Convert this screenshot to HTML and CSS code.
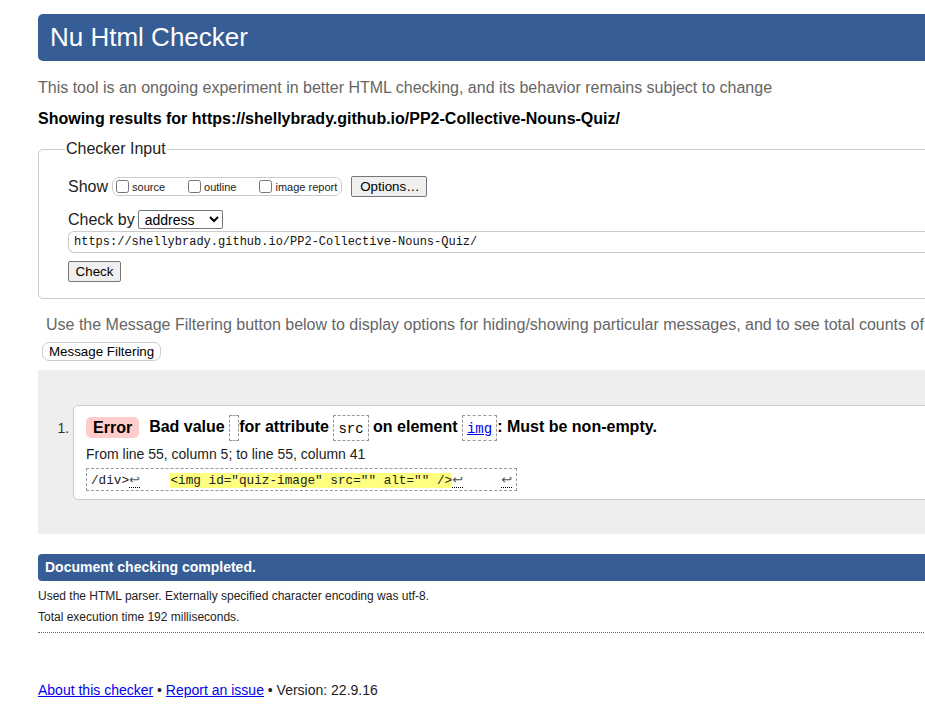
FILE: index.html
```html
<!DOCTYPE html>
<html lang="en">
<head>
<meta charset="utf-8">
<title>Showing results for https://shellybrady.github.io/PP2-Collective-Nouns-Quiz/ - Nu Html Checker</title>
<link rel="stylesheet" href="styles.css">
</head>
<body>
<div class="page">
  <h1 class="title">Nu Html Checker</h1>
  <p class="intro">This tool is an ongoing experiment in better HTML checking, and its behavior remains subject to change</p>
  <p class="showing">Showing results for https://shellybrady.github.io/PP2-Collective-Nouns-Quiz/</p>

  <fieldset class="checker">
    <legend class="legend">Checker Input</legend>
    <div class="row show-row">
      <span class="label">Show</span>
      <span class="opts">
        <label class="opt"><input type="checkbox" class="cb">source</label>
        <label class="opt"><input type="checkbox" class="cb">outline</label>
        <label class="opt"><input type="checkbox" class="cb">image report</label>
      </span>
      <button class="btn btn-options">Options…</button>
    </div>
    <div class="row by-row">
      <span class="label">Check by</span>
      <select class="select"><option>address</option></select>
    </div>
    <div class="url">https://shellybrady.github.io/PP2-Collective-Nouns-Quiz/</div>
    <button class="btn btn-check">Check</button>
  </fieldset>

  <p class="filter-note">Use the Message Filtering button below to display options for hiding/showing particular messages, and to see total counts of errors and warnings.</p>
  <button class="btn-filter">Message Filtering</button>

  <div class="results">
    <ol class="messages">
      <li class="msg">
        <div class="msg-box">
          <p class="msg-line"><span class="badge">Error</span><span class="msg-text">Bad value <code class="cbox empty"></code>for attribute <code class="cbox">src</code> on element <code class="cbox"><a href="#" class="elink">img</a></code>: Must be non-empty.</span></p>
          <p class="loc">From line 55, column 5; to line 55, column 41</p>
          <p class="extract"><code>/div&gt;<b class="lf">↩</b>    <span class="hl">&lt;img id="quiz-image" src="" alt="" /&gt;</span><b class="lf">↩</b>     <b class="lf">↩</b></code></p>
        </div>
      </li>
    </ol>
  </div>

  <p class="done">Document checking completed.</p>
  <p class="details first">Used the HTML parser. Externally specified character encoding was utf-8.</p>
  <p class="details">Total execution time 192 milliseconds.</p>
  <hr class="rule">

  <p class="footer"><a href="#" class="flink">About this checker</a> • <a href="#" class="flink">Report an issue</a> • Version: 22.9.16</p>
</div>
</body>
</html>
```

FILE: styles.css
```css
html { overflow: hidden; }
body {
  margin: 0;
  font-family: "Liberation Sans", Arial, sans-serif;
  color: #000;
  background: #fff;
}
.page {
  margin: 14px 0 0 38px;
  width: 1150px;
}
.title {
  margin: 0;
  height: 47px;
  line-height: 47px;
  background: #365d95;
  color: #fff;
  font-size: 26px;
  font-weight: normal;
  padding-left: 12px;
  border-radius: 5px;
}
.intro {
  margin: 17px 0 0;
  color: #666;
  font-size: 16px;
  line-height: 20px;
  white-space: nowrap;
}
.showing {
  margin: 11px 0 0;
  font-size: 16px;
  line-height: 20px;
  font-weight: bold;
  white-space: nowrap;
}
.checker {
  margin: 10px 0 0;
  border: 1px solid #ccc;
  border-radius: 5px;
  padding: 16px 0 16px 29px;
}
.legend {
  font-size: 16px;
  line-height: 20px;
  padding: 0 1px;
  margin-left: -3px;
  color: #222;
}
.row {
  display: flex;
  align-items: center;
}
.show-row { height: 23px; }
.label {
  font-size: 16px;
  color: #222;
}
.opts {
  display: inline-flex;
  align-items: center;
  margin-left: 4px;
  height: 17px;
  border: 1px solid #ccc;
  border-radius: 7px;
  padding: 0 4px 0 0;
}
.opt {
  display: inline-flex;
  align-items: center;
  font-size: 11px;
  margin-right: 19px;
  color: #222;
}
.opt:last-child { margin-right: 0; }
.cb {
  width: 13px;
  height: 13px;
  margin: 0 3px 0 3px;
}
.opt + .opt .cb { margin-left: 4px; }
.btn {
  font-family: "Liberation Sans", Arial, sans-serif;
  font-size: 13.33px;
  background: #efefef;
  border: 1px solid #767676;
  border-radius: 2px;
  color: #000;
  padding: 0 8px;
  height: 21px;
}
.btn-options {
  margin-left: 9px;
  width: 76px;
}
.by-row {
  margin-top: 11px;
  height: 21px;
}
.select {
  margin-left: 3px;
  width: 85px;
  height: 19px;
  font-family: "Liberation Sans", Arial, sans-serif;
  font-size: 14px;
  border: 1px solid #767676;
  border-radius: 2px;
  background: #fff;
  padding: 0 0 0 2px;
}
.url {
  margin-top: 1px;
  height: 22px;
  box-sizing: border-box;
  border: 1px solid #ccc;
  border-right: none;
  border-radius: 6px 0 0 6px;
  padding-left: 5px;
  font-family: "Liberation Mono", "Courier New", monospace;
  font-size: 12px;
  line-height: 20px;
  color: #111;
}
.btn-check {
  margin-top: 8px;
  width: 53px;
  padding: 0;
}
.filter-note {
  margin: 16px 0 0 8px;
  font-size: 16px;
  line-height: 20px;
  color: #666;
  white-space: nowrap;
}
.btn-filter {
  display: block;
  margin: 7px 0 0 4px;
  height: 19px;
  padding: 0 6px;
  font-family: "Liberation Sans", Arial, sans-serif;
  font-size: 13.33px;
  background: #fff;
  border: 1px solid #ccc;
  border-radius: 7px;
  color: #000;
}
.results {
  margin-top: 9px;
  background: #eee;
  padding: 35px 0 34px;
}
.messages {
  margin: 0;
  padding: 0 0 0 35px;
  font-size: 14px;
  color: #333;
}
.msg::marker { font-size: 14px; }
.msg-box {
  background: #fff;
  border: 1px solid #ccc;
  border-radius: 5px;
  padding: 8px 0 8px 12px;
}
.msg-line {
  margin: 0;
  display: flex;
  align-items: center;
  height: 27px;
  font-size: 16px;
  font-weight: bold;
  color: #000;
}
.badge {
  display: inline-block;
  background: #fcc;
  border-radius: 5px;
  padding: 0 7px;
  height: 21px;
  line-height: 21px;
  margin-right: 10px;
}
.msg-text { white-space: pre; }
.cbox {
  display: inline-block;
  border: 1px dashed #999;
  font-family: "Liberation Mono", "Courier New", monospace;
  font-size: 14px;
  font-weight: normal;
  padding: 0 4px;
  height: 26px;
  line-height: 26px;
  vertical-align: middle;
  box-sizing: border-box;
}
.empty { width: 10px; padding: 0; }
.elink { color: #00e; }
.loc {
  margin: 4px 0 0;
  font-size: 14px;
  line-height: 18px;
  color: #222;
}
.extract {
  margin: 5px 0 0;
  display: inline-block;
  border: 1px dashed #999;
  height: 23px;
  box-sizing: border-box;
  padding: 0 4px;
  line-height: 21px;
}
.extract code {
  font-family: "Liberation Mono", "Courier New", monospace;
  font-size: 12.7px;
  white-space: pre;
  color: #222;
}
.hl { background: #ffff80; }
.lf {
  font-family: "DejaVu Sans", sans-serif;
  font-size: 13px;
  font-weight: normal;
  color: #555;
  border-bottom: 1px dotted #000;
}
.done {
  margin: 20px 0 0;
  height: 27px;
  line-height: 27px;
  background: #365d95;
  color: #fff;
  font-size: 14px;
  font-weight: bold;
  padding-left: 7px;
  border-radius: 4px 0 0 4px;
}
.details {
  margin: 6px 0 0;
  font-size: 12px;
  line-height: 15px;
  color: #222;
}
.details.first { margin-top: 8px; }
.rule {
  margin: 7px 0 0;
  border: none;
  border-top: 1px dotted #666;
  height: 0;
}
.footer {
  margin: 48px 0 0;
  font-size: 14px;
  line-height: 18px;
  color: #222;
}
.flink { color: #00e; }
```
